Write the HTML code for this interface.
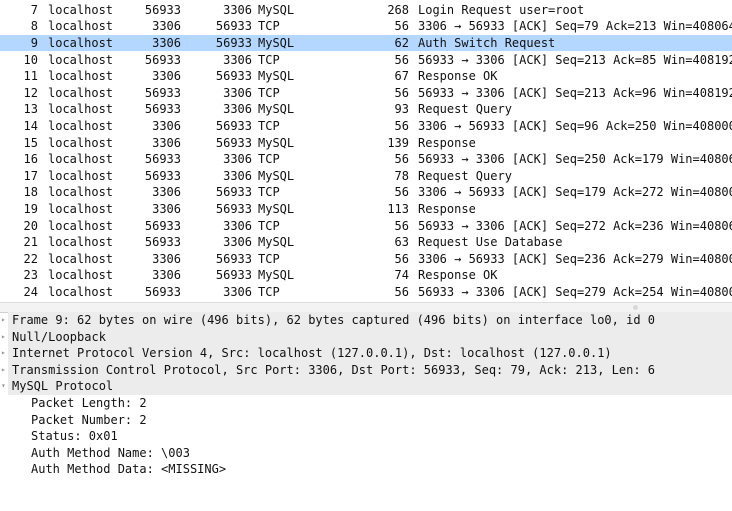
<!DOCTYPE html>
<html><head><meta charset="utf-8"><style>
body{margin:0;width:732px;height:511px;overflow:hidden;background:#fff;font-family:"DejaVu Sans Mono","Liberation Mono",monospace;font-size:12px;color:#111;position:relative}
.r{position:absolute;left:0;width:732px;height:16.6px;line-height:16.6px;white-space:pre}
.r span{position:absolute;top:0}
.n{right:694px;text-align:right}
.h{left:48px}
.s{right:551px}
.d{right:480px}
.p{left:258px}
.l{right:323px}
.i{left:418px}
.sel{background:#b3d7ff}
.sp{position:absolute;left:0;top:302px;width:732px;height:9px;background:#f3f3f3;border-top:1px solid #ddd;border-bottom:1px solid #d0d0d0}
.dot{position:absolute;left:633px;top:2px;width:5px;height:5px;border-radius:50%;background:#d8d8d8}
.t{position:absolute;left:0;width:732px;height:16.6px;line-height:16.6px;white-space:pre}
.g{background:#ececec;left:8px;width:724px;padding-left:4px;box-sizing:border-box}
.a{position:absolute;left:1px;font-size:8px;color:#999;line-height:16.6px}
.c{left:31px}
</style></head><body>
<div class="r" style="top:1.7px"><span class="n">7</span><span class="h">localhost</span><span class="s">56933</span><span class="d">3306</span><span class="p">MySQL</span><span class="l">268</span><span class="i">Login Request user=root</span></div>
<div class="r" style="top:18.3px"><span class="n">8</span><span class="h">localhost</span><span class="s">3306</span><span class="d">56933</span><span class="p">TCP</span><span class="l">56</span><span class="i">3306 → 56933 [ACK] Seq=79 Ack=213 Win=408064</span></div>
<div class="r sel" style="top:34.9px"><span class="n">9</span><span class="h">localhost</span><span class="s">3306</span><span class="d">56933</span><span class="p">MySQL</span><span class="l">62</span><span class="i">Auth Switch Request</span></div>
<div class="r" style="top:51.5px"><span class="n">10</span><span class="h">localhost</span><span class="s">56933</span><span class="d">3306</span><span class="p">TCP</span><span class="l">56</span><span class="i">56933 → 3306 [ACK] Seq=213 Ack=85 Win=408192</span></div>
<div class="r" style="top:68.1px"><span class="n">11</span><span class="h">localhost</span><span class="s">3306</span><span class="d">56933</span><span class="p">MySQL</span><span class="l">67</span><span class="i">Response OK</span></div>
<div class="r" style="top:84.7px"><span class="n">12</span><span class="h">localhost</span><span class="s">56933</span><span class="d">3306</span><span class="p">TCP</span><span class="l">56</span><span class="i">56933 → 3306 [ACK] Seq=213 Ack=96 Win=408192</span></div>
<div class="r" style="top:101.3px"><span class="n">13</span><span class="h">localhost</span><span class="s">56933</span><span class="d">3306</span><span class="p">MySQL</span><span class="l">93</span><span class="i">Request Query</span></div>
<div class="r" style="top:117.9px"><span class="n">14</span><span class="h">localhost</span><span class="s">3306</span><span class="d">56933</span><span class="p">TCP</span><span class="l">56</span><span class="i">3306 → 56933 [ACK] Seq=96 Ack=250 Win=408000</span></div>
<div class="r" style="top:134.5px"><span class="n">15</span><span class="h">localhost</span><span class="s">3306</span><span class="d">56933</span><span class="p">MySQL</span><span class="l">139</span><span class="i">Response</span></div>
<div class="r" style="top:151.1px"><span class="n">16</span><span class="h">localhost</span><span class="s">56933</span><span class="d">3306</span><span class="p">TCP</span><span class="l">56</span><span class="i">56933 → 3306 [ACK] Seq=250 Ack=179 Win=408064</span></div>
<div class="r" style="top:167.7px"><span class="n">17</span><span class="h">localhost</span><span class="s">56933</span><span class="d">3306</span><span class="p">MySQL</span><span class="l">78</span><span class="i">Request Query</span></div>
<div class="r" style="top:184.3px"><span class="n">18</span><span class="h">localhost</span><span class="s">3306</span><span class="d">56933</span><span class="p">TCP</span><span class="l">56</span><span class="i">3306 → 56933 [ACK] Seq=179 Ack=272 Win=408000</span></div>
<div class="r" style="top:200.9px"><span class="n">19</span><span class="h">localhost</span><span class="s">3306</span><span class="d">56933</span><span class="p">MySQL</span><span class="l">113</span><span class="i">Response</span></div>
<div class="r" style="top:217.5px"><span class="n">20</span><span class="h">localhost</span><span class="s">56933</span><span class="d">3306</span><span class="p">TCP</span><span class="l">56</span><span class="i">56933 → 3306 [ACK] Seq=272 Ack=236 Win=408064</span></div>
<div class="r" style="top:234.1px"><span class="n">21</span><span class="h">localhost</span><span class="s">56933</span><span class="d">3306</span><span class="p">MySQL</span><span class="l">63</span><span class="i">Request Use Database</span></div>
<div class="r" style="top:250.7px"><span class="n">22</span><span class="h">localhost</span><span class="s">3306</span><span class="d">56933</span><span class="p">TCP</span><span class="l">56</span><span class="i">3306 → 56933 [ACK] Seq=236 Ack=279 Win=408000</span></div>
<div class="r" style="top:267.3px"><span class="n">23</span><span class="h">localhost</span><span class="s">3306</span><span class="d">56933</span><span class="p">MySQL</span><span class="l">74</span><span class="i">Response OK</span></div>
<div class="r" style="top:283.9px"><span class="n">24</span><span class="h">localhost</span><span class="s">56933</span><span class="d">3306</span><span class="p">TCP</span><span class="l">56</span><span class="i">56933 → 3306 [ACK] Seq=279 Ack=254 Win=408000</span></div>
<div class="sp"><div class="dot"></div></div>
<div class="a" style="top:312px">▸</div><div class="t g" style="top:312px">Frame 9: 62 bytes on wire (496 bits), 62 bytes captured (496 bits) on interface lo0, id 0</div>
<div class="a" style="top:328.6px">▸</div><div class="t g" style="top:328.6px">Null/Loopback</div>
<div class="a" style="top:345.2px">▸</div><div class="t g" style="top:345.2px">Internet Protocol Version 4, Src: localhost (127.0.0.1), Dst: localhost (127.0.0.1)</div>
<div class="a" style="top:361.8px">▸</div><div class="t g" style="top:361.8px">Transmission Control Protocol, Src Port: 3306, Dst Port: 56933, Seq: 79, Ack: 213, Len: 6</div>
<div class="a" style="top:378.4px">▾</div><div class="t g" style="top:378.4px">MySQL Protocol</div>
<div class="t c" style="top:395px">Packet Length: 2</div>
<div class="t c" style="top:411.6px">Packet Number: 2</div>
<div class="t c" style="top:428.2px">Status: 0x01</div>
<div class="t c" style="top:444.8px">Auth Method Name: \003</div>
<div class="t c" style="top:461.4px">Auth Method Data: &lt;MISSING&gt;</div>
</body></html>
